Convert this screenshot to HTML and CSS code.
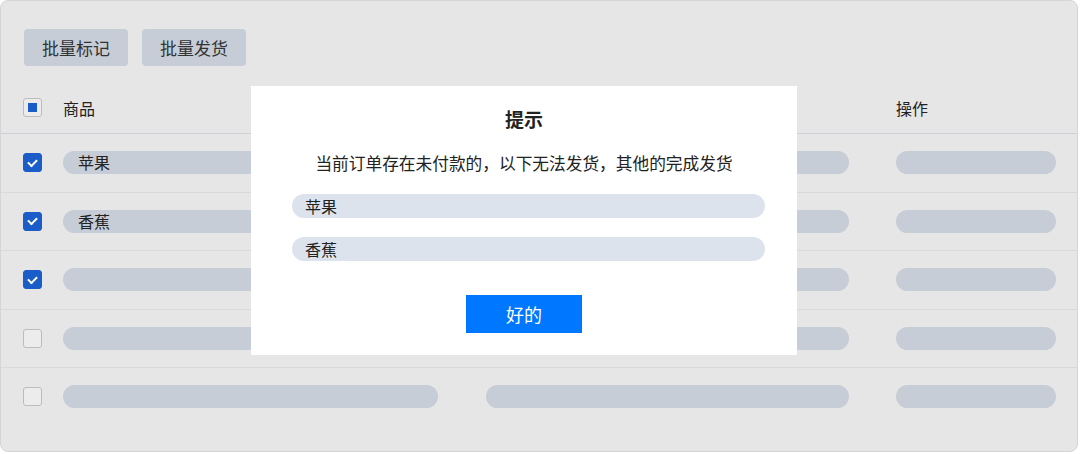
FILE: index.html
```html
<!DOCTYPE html>
<html lang="zh-CN">

<head>
    <title>批量发货提示</title>
    <meta charset="UTF-8">
    <meta name="viewport" content="width=device-width, initial-scale=1.0">
    <link rel="stylesheet" href="styles.css">
</head>

<body>
    <div class="card">
        <div class="toolbar">
            <button class="tool-btn">批量标记</button>
            <button class="tool-btn">批量发货</button>
        </div>
        <div class="table">
            <div class="row head">
                <span class="check partial"></span>
                <span class="cell">商品</span>
                <span class="cell"></span>
                <span class="cell">操作</span>
            </div>
            <div class="row">
                <span class="check on"></span>
                <span class="pill wide">苹果</span>
                <span class="pill mid"></span>
                <span class="pill short"></span>
            </div>
            <div class="row">
                <span class="check on"></span>
                <span class="pill wide">香蕉</span>
                <span class="pill mid"></span>
                <span class="pill short"></span>
            </div>
            <div class="row">
                <span class="check on"></span>
                <span class="pill wide"></span>
                <span class="pill mid"></span>
                <span class="pill short"></span>
            </div>
            <div class="row">
                <span class="check"></span>
                <span class="pill wide"></span>
                <span class="pill mid"></span>
                <span class="pill short"></span>
            </div>
            <div class="row last">
                <span class="check"></span>
                <span class="pill wide"></span>
                <span class="pill mid"></span>
                <span class="pill short"></span>
            </div>
        </div>

        <div class="dialog">
            <h4>提示</h4>
            <p>当前订单存在未付款的，以下无法发货，其他的完成发货</p>
            <ul class="fail-list">
                <li>苹果</li>
                <li>香蕉</li>
            </ul>
            <button class="ok">好的</button>
        </div>
    </div>
</body>

</html>
```

FILE: styles.css
```css
body,
ul,
p,
h4 {
    margin: 0;
}
ul {
    list-style: none;
    padding-left: 0;
}
body {
    background: #fff;
    font-family: "Noto Sans CJK SC", sans-serif;
    color: #222;
}
.card {
    position: relative;
    width: 1078px;
    height: 452px;
    box-sizing: border-box;
    border: 1px solid #d5d5d5;
    border-radius: 8px;
    background: #e6e6e6;
}
.toolbar {
    display: flex;
    gap: 14px;
    padding: 28px 0 0 23px;
}
.tool-btn {
    width: 104px;
    height: 37px;
    border: none;
    border-radius: 4px;
    background: #c6cdd6;
    color: #333;
    font-family: inherit;
    font-size: 17px;
}
.table {
    margin-top: 16px;
}
.row {
    display: grid;
    grid-template-columns: 40px 423px 410px 160px;
    align-items: center;
    height: 57.5px;
    padding-left: 22px;
    border-bottom: 1px solid #d9d9d9;
}
.row.head {
    height: 51px;
    border-bottom-color: #cdd1d7;
}
.row.last {
    border-bottom: none;
}
.cell {
    font-size: 16px;
}
.check {
    box-sizing: border-box;
    width: 19px;
    height: 19px;
    border: 1px solid #bcbcbc;
    border-radius: 3px;
    background: #ececec;
    display: flex;
    align-items: center;
    justify-content: center;
}
.check.partial::after {
    content: "";
    width: 9px;
    height: 9px;
    background: #1a5dc8;
}
.check.on {
    border-color: #1a5dc8;
    background: #1a5dc8;
}
.check.on::after {
    content: "";
    width: 7px;
    height: 4px;
    border-left: 2px solid #fff;
    border-bottom: 2px solid #fff;
    transform: translateY(-1px) rotate(-45deg);
}
.pill {
    height: 23px;
    line-height: 23px;
    border-radius: 12px;
    background: #c6cdd6;
    padding-left: 15px;
    box-sizing: border-box;
    font-size: 16px;
}
.pill.wide {
    width: 375px;
}
.pill.mid {
    width: 363px;
}
.pill.short {
    width: 160px;
}
.dialog {
    position: absolute;
    left: 250px;
    top: 85px;
    width: 546px;
    height: 269px;
    box-sizing: border-box;
    background: #fff;
    padding-top: 20px;
    display: flex;
    flex-direction: column;
    align-items: center;
}
.dialog h4 {
    font-size: 19px;
    font-weight: bold;
    line-height: 26px;
}
.dialog p {
    margin-top: 19px;
    font-size: 16.7px;
    line-height: 24px;
    color: #222;
}
.fail-list {
    align-self: stretch;
    margin: 19px 32px 0 41px;
    display: flex;
    flex-direction: column;
    gap: 19px;
}
.fail-list>li {
    height: 24px;
    line-height: 24px;
    border-radius: 12px;
    background: #dde3ec;
    padding-left: 13px;
    font-size: 16px;
}
.ok {
    margin-top: 34px;
    width: 116px;
    height: 38px;
    border: none;
    background: #0077ff;
    color: #fff;
    font-family: inherit;
    font-size: 18px;
}
```
